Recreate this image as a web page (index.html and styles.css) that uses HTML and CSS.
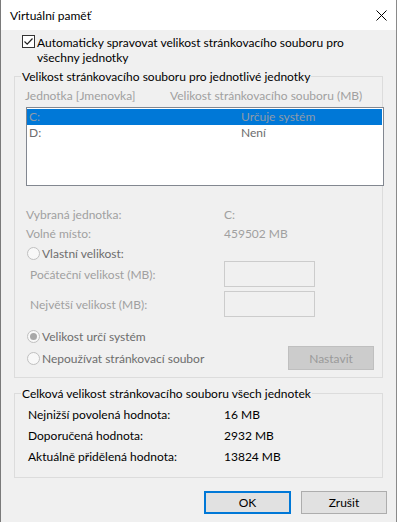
FILE: index.html
```html
<!DOCTYPE html>
<html lang="cs">
<head>
  <meta charset="UTF-8" />
  <title>Virtuální paměť</title>
  <link rel="stylesheet" href="styles.css">
</head>
<body>
  <div class="window">
    <div class="titlebar">
      <span class="title">Virtuální paměť</span>
      <svg class="close" width="11" height="11" viewBox="0 0 11 11">
        <path d="M0.5 0.5 L10.5 10.5 M10.5 0.5 L0.5 10.5" stroke="#000" stroke-width="1" fill="none"/>
      </svg>
    </div>

    <div class="content">
      <div class="check-row">
        <span class="checkbox">
          <svg width="11" height="11" viewBox="0 0 11 11">
            <path d="M1.5 5.5 L4.2 8.2 L9.5 2.5" stroke="#222" stroke-width="1.2" fill="none"/>
          </svg>
        </span>
        <span class="check-label">Automaticky spravovat velikost stránkovacího souboru pro<br>všechny jednotky</span>
      </div>

      <fieldset class="group group-drives">
        <legend>Velikost stránkovacího souboru pro jednotlivé jednotky</legend>

        <div class="list-head">
          <span>Jednotka [Jmenovka]</span>
          <span>Velikost stránkovacího souboru (MB)</span>
        </div>

        <div class="listbox">
          <div class="list-row selected"><span>C:</span><span>Určuje systém</span></div>
          <div class="list-row"><span>D:</span><span>Není</span></div>
        </div>

        <div class="info">
          <span>Vybraná jednotka:</span><span>C:</span>
          <span>Volné místo:</span><span>459502 MB</span>
        </div>

        <div class="radio-row custom">
          <span class="radio"></span><span>Vlastní velikost:</span>
        </div>

        <div class="size-rows">
          <div class="size-row"><span>Počáteční velikost (MB):</span><span class="textbox"></span></div>
          <div class="size-row"><span>Největší velikost (MB):</span><span class="textbox"></span></div>
        </div>

        <div class="radio-row system">
          <span class="radio checked"></span><span>Velikost určí systém</span>
        </div>

        <div class="last-row">
          <div class="radio-row">
            <span class="radio"></span><span>Nepoužívat stránkovací soubor</span>
          </div>
          <button class="btn btn-disabled">Nastavit</button>
        </div>
      </fieldset>

      <fieldset class="group group-total">
        <legend>Celková velikost stránkovacího souboru všech jednotek</legend>
        <div class="totals">
          <span>Nejnižší povolená hodnota:</span><span>16 MB</span>
          <span>Doporučená hodnota:</span><span>2932 MB</span>
          <span>Aktuálně přidělená hodnota:</span><span>13824 MB</span>
        </div>
      </fieldset>

      <div class="actions">
        <button class="btn btn-default">OK</button>
        <button class="btn">Zrušit</button>
      </div>
    </div>
  </div>
</body>
</html>
```

FILE: styles.css
```css
* {
  box-sizing: border-box;
}
body {
  margin: 0;
  font-family: Lato, "Noto Sans", sans-serif;
  font-size: 12px;
  line-height: 15px;
  color: #000;
  background: #f0f0f0;
}
.window {
  width: 397px;
  height: 522px;
  border-left: 1px solid #7a7a7a;
  border-right: 1px solid #8a8a8a;
  background: #f0f0f0;
}
.titlebar {
  height: 30px;
  background: #fff;
  display: flex;
  align-items: center;
  justify-content: space-between;
  padding: 0 9px 0 9px;
}
.title {
  padding-top: 1px;
}
.close {
  margin-right: 0;
  margin-top: 1px;
}

.content {
  padding-top: 5px;
}
.check-row {
  display: flex;
  align-items: flex-start;
  padding-left: 21px;
}
.checkbox {
  width: 13px;
  height: 13px;
  border: 1px solid #333;
  background: #fff;
  display: flex;
  align-items: center;
  justify-content: center;
  margin-top: 0;
  margin-right: 2px;
}
.check-label {
  line-height: 15px;
}

.group {
  margin: 4px 13px 0 13px;
  border: 1px solid #dcdcdc;
  padding: 4px 0 7px 11px;
}
.group legend {
  padding: 0 1px;
  margin-left: -5px;
  line-height: 15px;
}

.list-head {
  display: grid;
  grid-template-columns: 145px 1fr;
  margin-left: -1px;
  color: #a0a0a0;
}
.listbox {
  margin-top: 4px;
  width: calc(100% + 2px);
  height: 79px;
  border: 1px solid #828790;
  background: #fff;
  padding: 1px 1px 0 0;
}
.list-row {
  display: grid;
  grid-template-columns: 212px 1fr;
  height: 16px;
  line-height: 16px;
  padding-left: 2px;
  color: #6d6d6d;
}
.list-row.selected {
  background: #0078d7;
  color: #8f9ba8;
}

.info {
  display: grid;
  grid-template-columns: 198px 1fr;
  row-gap: 4px;
  margin-top: 21px;
  color: #a0a0a0;
}

.radio-row {
  display: flex;
  align-items: center;
  gap: 2px;
  color: #6d6d6d;
  margin-left: 1px;
}
.radio-row.custom {
  margin-top: 5px;
}
.radio-row.system {
  margin-top: 12px;
}
.radio {
  width: 13px;
  height: 13px;
  border: 1px solid #c0c0c0;
  border-radius: 50%;
  background: #f8f8f8;
  display: flex;
  align-items: center;
  justify-content: center;
}
.radio.checked::after {
  content: "";
  width: 7px;
  height: 7px;
  border-radius: 50%;
  background: #a8a8a8;
}

.size-rows {
  display: flex;
  flex-direction: column;
  gap: 4px;
}
.size-row {
  display: grid;
  grid-template-columns: 198px 91px;
  align-items: center;
  height: 26px;
  padding-left: 4px;
  color: #a0a0a0;
}
.size-row span:first-child {
  margin-left: 0;
}
.size-row {
  grid-template-columns: 194px 91px;
}
.textbox {
  height: 26px;
  border: 1px solid #cccccc;
  background: #f0f0f0;
}

.last-row {
  display: flex;
  align-items: center;
  justify-content: space-between;
  height: 24px;
  margin-top: 2px;
  padding-right: 8px;
}

.btn {
  font-family: inherit;
  font-size: 12px;
  width: 86px;
  height: 23px;
  padding: 0;
  background: #e1e1e1;
  border: 1px solid #adadad;
  color: #000;
}
.btn-disabled {
  height: 24px;
  background: #cccccc;
  border-color: #bfbfbf;
  color: #9a9a9a;
}
.btn-default {
  width: 87px;
  border: 2px solid #0078d7;
}

.group-total {
  margin-top: 8px;
  padding: 6px 0 13px 11px;
}
.totals {
  display: grid;
  grid-template-columns: 198px 1fr;
  row-gap: 6px;
  padding-left: 2px;
}
.totals span:nth-child(2n) {
  margin-left: -2px;
}

.actions {
  display: flex;
  justify-content: flex-end;
  gap: 10px;
  margin-top: 13px;
  padding-right: 9px;
}
```
